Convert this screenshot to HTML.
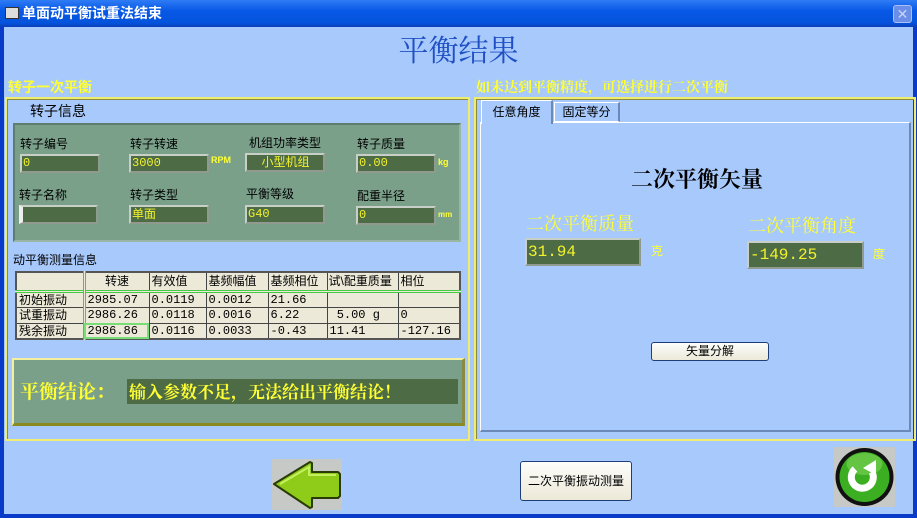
<!DOCTYPE html>
<html><head><meta charset="utf-8"><style>
*{margin:0;padding:0;box-sizing:border-box}
body{width:917px;height:518px;overflow:hidden;position:relative;background:#0a3bc8;font-family:"Liberation Sans","Noto Sans CJK SC","WenQuanYi Zen Hei",sans-serif;font-size:12px}
.a{position:absolute}
#title{left:0;top:0;width:917px;height:27px;background:linear-gradient(#2f7cf6,#0758e6 40%,#0453dc 85%,#0a3fb8);color:#fff;font-weight:bold;font-size:14px;line-height:27px;padding-left:22px}
#client{left:4px;top:27px;width:909px;height:487px;background:#a8c9fb}
.y{color:#ffff33;font-weight:bold}
.inp{position:absolute;height:19px;background:#4d6b44;border:2px solid #c8cfc6;border-right-color:#909a8e;border-bottom-color:#909a8e;color:#f2f22c;font-size:12px;line-height:15px;padding-left:1px;font-family:"Liberation Mono","Noto Sans CJK SC",monospace}
.lbl{position:absolute;font-size:12px;color:#000}
table{border-collapse:collapse;font-size:12px;background:#ece9d8;table-layout:fixed}
td{border:1px solid #444;height:16px;padding:0 2px;line-height:14px;font-family:"Liberation Mono","Noto Sans CJK SC",monospace;white-space:nowrap;overflow:hidden}
.btn{position:absolute;background:linear-gradient(#fdfdfb,#ece9d8);border:1px solid #1e3e7a;border-radius:3px;text-align:center;font-size:12px}
</style></head><body>
<div id="title" class="a">单面动平衡试重法结束</div>
<div class="a" style="left:5px;top:7px;width:14px;height:12px;background:#ddd;border:1px solid #333"></div>
<div class="a" style="left:893px;top:5px;width:19px;height:18px;background:#6b8ee8;border:1px solid #aac0f5;border-radius:3px;color:#c8d4f4;font-size:14px;line-height:16px;text-align:center">✕</div>
<div id="client" class="a"></div>
<div class="a" style="left:0;top:31px;width:917px;text-align:center;font-family:'Noto Serif CJK SC',serif;font-size:30px;color:#1e4fc4;line-height:34px">平衡结果</div>

<div class="a y" style="left:8px;top:77px;font-size:14px">转子一次平衡</div>
<div class="a" style="left:5px;top:97px;width:465px;height:344px;border:2px solid #f0ec70;box-shadow:inset 1px 1px 0 #8a8a40"></div>
<div class="a" style="left:30px;top:101px;font-size:14px">转子信息</div>
<div class="a" style="left:13px;top:123px;width:448px;height:119px;background:#7ba08a;border:2px solid #9ab7a6;border-top-color:#5d7e6d;border-left-color:#5d7e6d"></div>
<div class="lbl" style="left:20px;top:135px">转子编号</div>
<div class="lbl" style="left:130px;top:135px">转子转速</div>
<div class="lbl" style="left:249px;top:134px">机组功率类型</div>
<div class="lbl" style="left:357px;top:135px">转子质量</div>
<div class="inp" style="left:20px;top:154px;width:80px">0</div>
<div class="inp" style="left:129px;top:154px;width:80px">3000</div>
<div class="a" style="left:211px;top:155px;color:#ff3;font-size:9px;font-weight:bold">RPM</div>
<div class="inp" style="left:245px;top:153px;width:80px;text-align:center;font-family:'Liberation Sans','Noto Sans CJK SC',sans-serif">小型机组</div>
<div class="inp" style="left:356px;top:154px;width:80px">0.00</div>
<div class="a" style="left:438px;top:157px;color:#ff3;font-size:9px;font-weight:bold">kg</div>
<div class="lbl" style="left:19px;top:186px">转子名称</div>
<div class="lbl" style="left:130px;top:186px">转子类型</div>
<div class="lbl" style="left:246px;top:185px">平衡等级</div>
<div class="lbl" style="left:357px;top:187px">配重半径</div>
<div class="inp" style="left:19px;top:205px;width:79px;border-left:4px solid #eee"></div>
<div class="inp" style="left:129px;top:205px;width:80px;font-family:'Liberation Sans','Noto Sans CJK SC',sans-serif">单面</div>
<div class="inp" style="left:245px;top:205px;width:80px">G40</div>
<div class="inp" style="left:356px;top:206px;width:80px">0</div>
<div class="a" style="left:438px;top:210px;color:#ff3;font-size:8px;font-weight:bold">mm</div>

<div class="a" style="left:13px;top:251px;font-size:12px">动平衡测量信息</div>
<table class="a" style="left:15px;top:271px;width:446px;border:2px solid #555">
<colgroup><col style="width:68px"><col style="width:65px"><col style="width:57px"><col style="width:62px"><col style="width:59px"><col style="width:71px"><col></colgroup>
<tr><td style="height:19px;border-right:3px double #4c4"></td><td style="text-align:center;font-family:'Liberation Sans','Noto Sans CJK SC',sans-serif">转速</td><td style="font-family:'Liberation Sans','Noto Sans CJK SC',sans-serif">有效值</td><td style="font-family:'Liberation Sans','Noto Sans CJK SC',sans-serif">基频幅值</td><td style="font-family:'Liberation Sans','Noto Sans CJK SC',sans-serif">基频相位</td><td style="font-family:'Liberation Sans','Noto Sans CJK SC',sans-serif;padding:0 1px">试\配重质量</td><td style="font-family:'Liberation Sans','Noto Sans CJK SC',sans-serif">相位</td></tr>
<tr style="border-top:3px double #4c4"><td style="border-right:3px double #4c4;font-family:'Liberation Sans','Noto Sans CJK SC',sans-serif">初始振动</td><td>2985.07</td><td>0.0119</td><td>0.0012</td><td>21.66</td><td></td><td></td></tr>
<tr><td style="border-right:3px double #4c4;font-family:'Liberation Sans','Noto Sans CJK SC',sans-serif">试重振动</td><td>2986.26</td><td>0.0118</td><td>0.0016</td><td>6.22</td><td>&nbsp;5.00 g</td><td>0</td></tr>
<tr><td style="border-right:3px double #4c4;font-family:'Liberation Sans','Noto Sans CJK SC',sans-serif">残余振动</td><td style="outline:2px solid #7d7;outline-offset:-2px">2986.86</td><td>0.0116</td><td>0.0033</td><td>-0.43</td><td>11.41</td><td>-127.16</td></tr>
</table>

<div class="a" style="left:12px;top:358px;width:453px;height:68px;background:#7ba08a;border:2px solid #f4f0a0;border-bottom:3px solid #8a8a20;border-right:3px solid #8a8a40"></div>
<div class="a y" style="left:20px;top:377px;font-size:19px;font-family:'Noto Serif CJK SC',serif">平衡结论：</div>
<div class="a y" style="left:127px;top:379px;width:331px;height:25px;background:#4d6b44;font-size:17px;line-height:24px;padding-left:2px;font-family:'Noto Serif CJK SC',serif">输入参数不足，无法给出平衡结论！</div>

<div class="a y" style="left:476px;top:77px;font-size:14px;font-family:'Noto Serif CJK SC',serif">如未达到平衡精度，可选择进行二次平衡</div>
<div class="a" style="left:474px;top:97px;width:442px;height:344px;border:2px solid #f0ec70;box-shadow:inset 1px 1px 0 #8a8a40"></div>
<div class="a" style="left:480px;top:122px;width:431px;height:310px;background:#a8c9fb;border:1px solid #fff;border-right:2px solid #6a88b8;border-bottom:2px solid #6a88b8"></div>
<div class="a" style="left:481px;top:100px;width:72px;height:24px;background:#a8c9fb;border:1px solid #fff;border-bottom:none;border-right:2px solid #6a88b8;text-align:center;line-height:22px">任意角度</div>
<div class="a" style="left:554px;top:102px;width:66px;height:20px;background:#a8c9fb;border:1px solid #fff;border-right:2px solid #6a88b8;text-align:center;line-height:18px">固定等分</div>
<div class="a" style="left:480px;top:163px;width:434px;text-align:center;font-size:22px;font-family:'Noto Serif CJK SC',serif;font-weight:bold">二次平衡矢量</div>
<div class="a y" style="left:526px;top:210px;font-size:18px;font-weight:normal;font-family:'Noto Serif CJK SC',serif">二次平衡质量</div>
<div class="a y" style="left:748px;top:212px;font-size:18px;font-weight:normal;font-family:'Noto Serif CJK SC',serif">二次平衡角度</div>
<div class="inp" style="left:525px;top:238px;width:116px;height:28px;font-size:16px;line-height:24px">31.94</div>
<div class="a y" style="left:651px;top:242px;font-weight:normal">克</div>
<div class="inp" style="left:747px;top:241px;width:117px;height:28px;font-size:16px;line-height:24px">-149.25</div>
<div class="a y" style="left:873px;top:245px;font-weight:normal">度</div>
<div class="btn" style="left:651px;top:342px;width:118px;height:19px;line-height:17px">矢量分解</div>

<svg class="a" style="left:272px;top:459px" width="70" height="51">
<rect width="70" height="51" fill="#c6c9c6"/>
<path d="M2 25 L38 3 L40 4 L40 13 L66 13 L68 15 L68 37 L66 39 L40 39 L40 48 L38 49 Z" fill="#8fcc1a" stroke="#2a3a08" stroke-width="2" stroke-linejoin="round"/>
<path d="M8 25 L37 8 L37 16 L64 16" fill="none" stroke="#c4f060" stroke-width="2"/>
</svg>
<div class="btn" style="left:520px;top:461px;width:112px;height:40px;line-height:38px">二次平衡振动测量</div>
<svg class="a" style="left:834px;top:447px" width="61" height="60">
<rect width="61" height="60" fill="#c6c9c6"/>
<circle cx="30.5" cy="30" r="29" fill="#111"/>
<circle cx="30.5" cy="30" r="25" fill="#3cae22"/>
<ellipse cx="30.5" cy="17" rx="18" ry="11" fill="#7fd35a" opacity=".6"/>
<path d="M21 22 A11 11 0 1 0 38 25" fill="none" stroke="#fff" stroke-width="7"/>
<path d="M29 21 L42 13 L42 28 Z" fill="#fff"/>
</svg>
</body></html>
